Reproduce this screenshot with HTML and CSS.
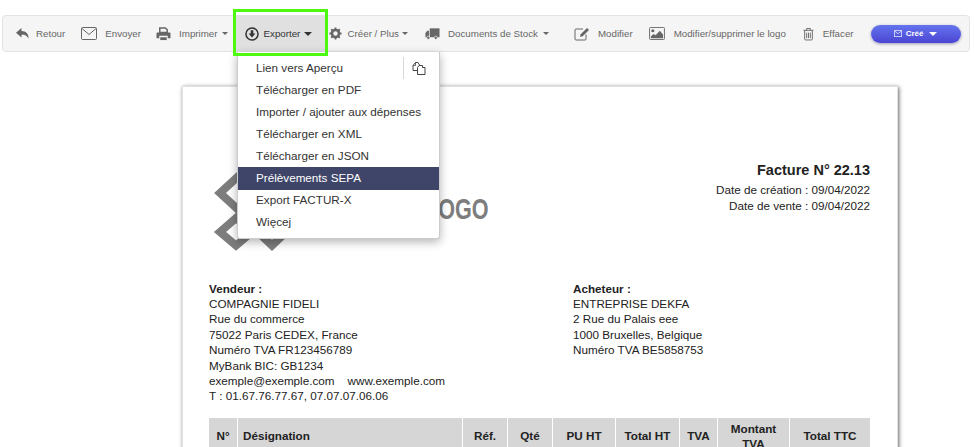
FILE: index.html
```html
<!DOCTYPE html>
<html lang="fr">
<head>
<meta charset="utf-8">
<title>Facture</title>
<link rel="stylesheet" href="styles.css">
</head>
<body>
<div class="toolbar">
  <div class="tool t-retour"><svg class="ic" width="13" height="12" viewBox="0 0 13 12"><path d="M5.500 0 0 4.800l5.500 4.700V6.700c3.200 0 5.500.6 7 4 .4-4.700-2.200-7.700-7-7.800z" fill="#666"/></svg><span>Retour</span></div>
  <div class="tool t-envoyer"><svg class="ic" width="16" height="13" viewBox="0 0 16 13"><rect x=".5" y=".5" width="15" height="12" rx="1" fill="none" stroke="#666"/><path d="m1 1.500 7 6 7-6" fill="none" stroke="#666"/></svg><span>Envoyer</span></div>
  <div class="tool t-imprimer"><svg class="ic" width="15" height="14" viewBox="0 0 16 15"><path d="M4 1h6l2 2v3H4z" fill="none" stroke="#666" stroke-width="1.600"/><path d="M1.500 6h13a1 1 0 0 1 1 1v5h-3V9.500h-9V12h-3V7a1 1 0 0 1 1-1z" fill="#666"/><path d="M4.500 11h7v3h-7z" fill="#666"/></svg><span>Imprimer</span><i class="caret"></i></div>
  <div class="tool t-exporter"><svg class="ic" width="14" height="14" viewBox="0 0 13 13"><circle cx="6.500" cy="6.500" r="5.600" fill="none" stroke="#333" stroke-width="1.400"/><path d="M5.300 3h2.400v3h1.900L6.500 9.800 3.400 6h1.900z" fill="#333"/></svg><span>Exporter</span><i class="caret dark"></i></div>
  <div class="tool t-creer"><svg class="ic" width="13" height="13" viewBox="0 0 14 14"><circle cx="7" cy="7" r="3.800" fill="none" stroke="#666" stroke-width="2.800"/><path d="M7 7 7 .5M7 7v6.500M7 7H.5M7 7h6.500M7 7 2.400 2.400M7 7l4.600 4.600M7 7l4.600-4.600M7 7l-4.600 4.600" stroke="#666" stroke-width="2" stroke-dasharray="0 4.500 2.500"/></svg><span>Créer / Plus</span><i class="caret"></i></div>
  <div class="tool t-stock"><svg class="ic" width="15" height="13" viewBox="0 0 16 13"><path d="M5 1h10.500v9.500H5z" fill="#666"/><path d="M4.200 3.500H2.300L.5 6.200v4.300h3.700z" fill="#666"/><circle cx="3.500" cy="11" r="1.700" fill="#666" stroke="#f5f5f5" stroke-width=".7"/><circle cx="11.500" cy="11" r="1.700" fill="#666" stroke="#f5f5f5" stroke-width=".7"/></svg><span>Documents de Stock</span><i class="caret"></i></div>
  <div class="tool t-modifier"><svg class="ic" width="16" height="14" viewBox="0 0 16 14"><path d="M12 7.500V12a1 1 0 0 1-1 1H2a1 1 0 0 1-1-1V3a1 1 0 0 1 1-1h7" fill="none" stroke="#666"/><path d="m6 10 .7-2.700L13 1l2 2-6.300 6.300z" fill="#666"/></svg><span>Modifier</span></div>
  <div class="tool t-logo"><svg class="ic" width="16" height="13" viewBox="0 0 17 14"><rect x=".5" y=".5" width="16" height="13" rx="1" fill="none" stroke="#666"/><circle cx="4" cy="4" r="1.700" fill="#666"/><path d="M2 12V10l3-2.500 2 1.500 4.500-5L15 8v4z" fill="#666"/></svg><span>Modifier/supprimer le logo</span></div>
  <div class="tool t-effacer"><svg class="ic" width="11" height="14" viewBox="0 0 12 14"><path d="M.5 3h11M4 3V1h4v2M1.800 3v9.500a1 1 0 0 0 1 1h6.400a1 1 0 0 0 1-1V3M4 5.500v6M6 5.500v6M8 5.500v6" fill="none" stroke="#666"/></svg><span>Effacer</span></div>
  <button class="status"><svg width="8" height="7" viewBox="0 0 8 7"><rect x=".4" y=".4" width="7.200" height="6.200" fill="none" stroke="#dfe2ff" stroke-width=".8"/><path d="m.5.800 3.500 3 3.500-3" fill="none" stroke="#dfe2ff" stroke-width=".8"/></svg><span>Créé</span><i class="caret light"></i></button>
</div>

<div class="export-frame"></div>

<ul class="menu">
  <li class="copy-row"><span>Lien vers Aperçu</span><span class="copy"><svg width="14" height="13" viewBox="0 0 14 13"><path d="M5 8.500H1V3.500L3.500.5H6l1.500 2.500" fill="none" stroke="#444" stroke-width="1"/><path d="M3.500.5V3.500H1" fill="none" stroke="#444" stroke-width=".8"/><path d="M7 3.500h3.500V5.500H13V12.500H5.500V5.500z" fill="#fff" stroke="#444" stroke-width="1"/></svg></span></li>
  <li>Télécharger en PDF</li>
  <li>Importer / ajouter aux dépenses</li>
  <li>Télécharger en XML</li>
  <li>Télécharger en JSON</li>
  <li class="active">Prélèvements SEPA</li>
  <li>Export FACTUR-X</li>
  <li>Więcej</li>
</ul>

<main class="paper">
  <header class="head">
    <div class="logo">
      <svg width="80" height="90" viewBox="0 0 80 90"><g fill="none" stroke="#7d7d7d" stroke-width="8"><path d="M32 5 8 27l24 22"/><path d="M8 66l16-14 16 14-16 13.500z"/><path d="M50 70l10 9.500L71 69"/></g></svg>
      <span class="logo-text">LOGO</span>
    </div>
    <div class="title">
      <h1>Facture N° 22.13</h1>
      <p>Date de création : 09/04/2022</p>
      <p>Date de vente : 09/04/2022</p>
    </div>
  </header>
  <section class="parties">
    <div class="party">
      <b>Vendeur :</b><br>COMPAGNIE FIDELI<br>Rue du commerce<br>75022 Paris CEDEX, France<br>Numéro TVA FR123456789<br>MyBank BIC: GB1234<br>exemple@exemple.com &nbsp;&nbsp;&nbsp;www.exemple.com<br>T : 01.67.76.77.67, 07.07.07.06.06
    </div>
    <div class="party">
      <b>Acheteur :</b><br>ENTREPRISE DEKFA<br>2 Rue du Palais eee<br>1000 Bruxelles, Belgique<br>Numéro TVA BE5858753
    </div>
  </section>
  <table class="items">
    <colgroup><col class="c1"><col class="c2"><col class="c3"><col class="c4"><col class="c5"><col class="c6"><col class="c7"><col class="c8"><col class="c9"></colgroup>
    <thead><tr><th>N°</th><th class="left">Désignation</th><th>Réf.</th><th>Qté</th><th>PU HT</th><th>Total HT</th><th>TVA</th><th>Montant TVA</th><th>Total TTC</th></tr></thead>
  </table>
</main>
</body>
</html>
```
FILE: styles.css
```css
html, body { margin: 0; height: 447px; overflow: hidden; background: #fff; }
body { position: relative; font-family: "Liberation Sans", Arial, sans-serif; color: #222; }

.toolbar { display: flex; align-items: center; box-sizing: border-box; height: 37px; margin: 15px 4px 0 2px; background: #f5f5f5; border: 1px solid #e3e3e3; border-radius: 4px; font-size: 9.750px; color: #666; }
.tool { display: flex; align-items: center; height: 100%; white-space: nowrap; }
.ic { flex: none; margin-right: 8px; }
.caret { width: 0; height: 0; margin-left: 4px; border: 3.500px solid transparent; border-top-color: #666; border-bottom: 0; }
.caret.dark { border-top-color: #333; border-width: 4px 4px 0; }
.caret.light { border-top-color: #fff; border-width: 4px 4px 0; }
.t-retour { margin-left: 13px; }
.t-retour .ic { margin-right: 7px; }
.t-envoyer { margin-left: 16px; }
.t-imprimer { margin-left: 15px; }
.t-exporter { margin-left: 8px; width: 89px; box-sizing: border-box; padding-left: 9px; background: #e0e0e0; color: #333; height: 37px; }
.t-exporter .ic { margin-right: 5px; }
.t-creer { margin-left: 4px; }
.t-creer .ic { margin-right: 6px; }
.t-creer .caret { margin-left: 3px; }
.t-stock { margin-left: 17px; }
.t-stock .caret { margin-left: 5px; }
.t-modifier { margin-left: 25px; }
.t-logo { margin-left: 16px; }
.t-logo .ic { margin-right: 9px; }
.t-effacer { margin-left: 17px; }
.t-effacer .ic { margin-right: 9px; }
.status { display: flex; align-items: center; justify-content: center; gap: 4px; box-sizing: border-box; width: 90px; height: 18px; margin-left: 17px; padding: 0; border: 0; border-radius: 9px; background: linear-gradient(#6474ee, #4a45d2); box-shadow: 0 1px 3px rgba(40, 40, 100, .45); color: #fff; font: bold 8px "Liberation Sans", Arial, sans-serif; }
.status .caret { margin-left: 2px; }

.export-frame { position: absolute; left: 233px; top: 9px; width: 95px; height: 47px; box-sizing: border-box; border: 3px solid #4dfa0f; z-index: 3; }

.menu { position: absolute; left: 237px; top: 52px; z-index: 2; width: 203px; box-sizing: border-box; margin: 0; padding: 5px 0 4px; list-style: none; background: #fff; border: 1px solid #ccc; border-top: 0; border-radius: 0 0 3px 3px; box-shadow: 0 3px 10px rgba(0, 0, 0, .3); font-size: 11.700px; color: #333; }
.menu li { height: 22px; line-height: 21px; padding: 0 18px; white-space: nowrap; }
.menu .active { height: 23px; line-height: 21px; background: #3e4569; color: #fff; }
.menu .active ~ li { line-height: 20px; }
.copy-row { position: relative; }
.copy { position: absolute; right: 0; top: 0; width: 36px; height: 22px; box-sizing: border-box; padding-right: 5px; border-left: 1px solid #d8d8d8; display: flex; justify-content: center; align-items: center; }

.paper { box-sizing: border-box; width: 716px; height: 500px; margin: 34px 0 0 182px; padding: 75px 27px 0 26px; background: #fff; border: 1px solid #e2e2e2; box-shadow: 1px 1px 4px rgba(0, 0, 0, .6); font-size: 11.700px; color: #222; }
.head { display: flex; justify-content: space-between; height: 118.500px; }
.logo { display: flex; align-items: flex-start; margin: 4px 0 0 3px; }
.logo-text { display: block; margin: 28px 0 0 133px; font-size: 30px; line-height: 30px; font-weight: bold; color: #7d7d7d; transform: scaleX(.72); transform-origin: left; }
.title { text-align: right; }
.title h1 { margin: 0 0 3px; font-size: 14.500px; line-height: 17px; font-weight: bold; }
.title p { margin: 0; line-height: 16px; }
.parties { display: flex; line-height: 15.400px; height: 137.500px; }
.party { flex: none; width: 364px; }
.items { table-layout: fixed; width: 663px; border-collapse: separate; border-spacing: 1px 0; margin-left: -1px; }
.items th { height: 35px; padding: 0 4px; background: #d6d6d6; font-size: 11.700px; line-height: 15px; font-weight: bold; color: #222; text-align: center; }
.items th.left { text-align: left; padding-left: 5px; }
.c1 { width: 28px; } .c2 { width: 224px; } .c3 { width: 44px; } .c4 { width: 44px; } .c5 { width: 62px; } .c6 { width: 63px; } .c7 { width: 37px; } .c8 { width: 71px; } .c9 { width: 80px; }
```
